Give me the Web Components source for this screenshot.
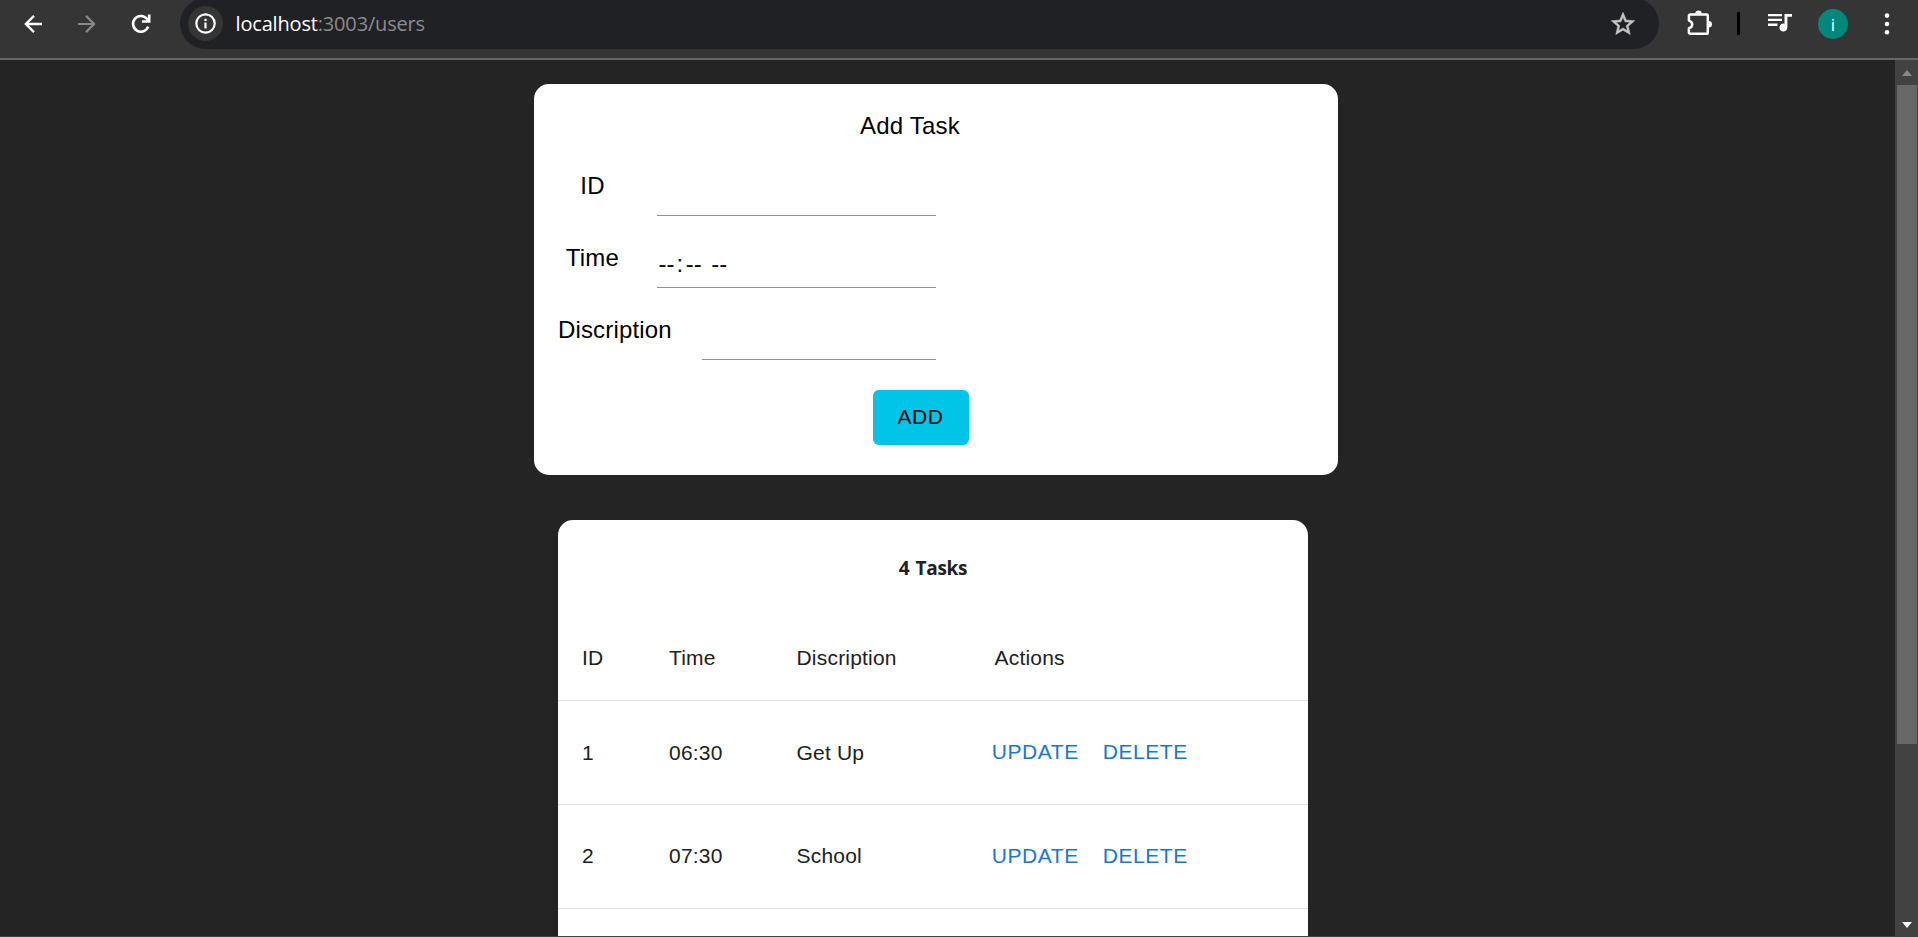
<!DOCTYPE html>
<html lang="en">
<head>
<meta charset="utf-8">
<title>Tasks</title>
<style>
html,body{margin:0;height:100%;overflow:hidden;background:#242424}
body{font-family:"Liberation Sans",Arial,sans-serif}
</style>
</head>
<body>
<task-app></task-app>
<script>
const define = (name, html, setup) => customElements.define(name, class extends HTMLElement {
  constructor() {
    super();
    this.attachShadow({ mode: 'open' }).innerHTML = html;
  }
  connectedCallback() { if (setup) setup(this, this.shadowRoot); }
});

define('browser-bar', `
<style>
:host{display:flex;align-items:flex-start;box-sizing:border-box;height:60px;background:#353535;border-bottom:2px solid #666;overflow:hidden}
svg{display:block;flex:none}
.nav{display:flex;width:180px;height:47px;align-items:center}
.omni{display:flex;align-items:center;box-sizing:border-box;width:1479px;height:51px;margin-top:-2px;border-radius:25.5px;background:#202124;padding:0 22px 0 8px}
.info{width:35px;height:35px;border-radius:50%;background:#353535;display:flex;align-items:center;justify-content:center}
.url{flex:1;margin-left:12.500px;font:20px/28px "Open Sans","Noto Sans",sans-serif;letter-spacing:-.17px;color:#8c8c8c}
.url b{font-weight:400;color:#fff}
.right{display:flex;align-items:center;height:47px}
.sep{width:3px;height:23px;background:#000;border-radius:1px}
.av{width:30px;height:30px;border-radius:50%;background:#00897b;color:#fff;font:17px/31px "Open Sans",sans-serif;text-align:center}
</style>
<div class="nav">
<svg width="18" height="18" viewBox="0 0 18 18" style="margin-left:24px" fill="none" stroke="#fff" stroke-width="2.4"><path d="M18 9H2M10 .9 1.9 9 10 17.1"/></svg>
<svg width="18" height="18" viewBox="0 0 18 18" style="margin-left:36px" fill="none" stroke="#888" stroke-width="2.2"><path d="M0 9h16M8 .9 16.1 9 8 17.1"/></svg>
<svg width="20" height="20" viewBox="0 0 20 20" style="margin-left:35px" fill="none" stroke="#fff" stroke-width="2.6"><path d="M17.2 12.6A7.8 7.8 0 1 1 16 5L18 7.2M18.2.5v7H11"/></svg>
</div>
<div class="omni">
<div class="info"><svg width="21" height="21" viewBox="0 0 21 21"><circle cx="10.500" cy="10.500" r="9.200" fill="none" stroke="#fff" stroke-width="2.200"/><path d="M9.400 9.500h2.200v6h-2.200zM9.400 5.800h2.200v2.200h-2.200z" fill="#fff"/></svg></div>
<div class="url"><b>localhost</b>:3003/users</div>
<svg width="28" height="28" viewBox="0 0 24 24"><path fill="#c4c4c4" stroke="#c4c4c4" stroke-width=".5" d="M22 9.240l-7.190-.620L12 2 9.190 8.630 2 9.240l5.460 4.730L5.820 21 12 17.270 18.180 21l-1.630-7.030L22 9.240zM12 15.400l-3.760 2.270 1-4.280-3.320-2.880 4.380-.380L12 6.100l1.710 4.040 4.380.380-3.320 2.880 1 4.280L12 15.400z"/></svg>
</div>
<div class="right">
<svg width="27" height="27" viewBox="0 0 27 27" style="margin-left:27px;margin-top:-3px"><path d="M4.200 5.500H20.500a1.300 1.300 0 0 1 1.300 1.300V23.400a1.300 1.300 0 0 1-1.300 1.300H4.200A1.300 1.300 0 0 1 2.900 23.400V19.200C7.300 18.200 7.300 12.600 2.900 11.600V6.800A1.300 1.300 0 0 1 4.200 5.500Z" fill="none" stroke="#fff" stroke-width="2.500" stroke-linejoin="round"/><path d="M9.300 4.700a3.200 3.200 0 0 1 6.400 0zM22.700 11.900a3.300 3.300 0 0 1 0 6.600z" fill="#fff"/></svg>
<div class="sep" style="margin-left:24px"></div>
<svg width="24" height="20" viewBox="0 0 24 20" style="margin-left:28px;margin-top:-2px"><path fill="#fff" d="M0 1h14v2.300H0zM0 5.800h14v2.300H0zM0 10.600h9.500v2.300H0zM16.500 1H24v2.800h-4.600V14.500a4 4 0 1 1-2.900-3.850z"/></svg>
<div class="av" style="margin-left:26px">i</div>
<svg width="6" height="22" viewBox="0 0 6 22" style="margin-left:36px" fill="#fff"><circle cx="3" cy="2.600" r="2.300"/><circle cx="3" cy="11" r="2.300"/><circle cx="3" cy="19.200" r="2.300"/></svg>
</div>`);

define('scroll-rail', `
<style>
:host{display:flex;flex-direction:column;align-items:center;box-sizing:border-box;width:23px;background:#424242;padding:10px 1px 8px 2px}
i{display:block;width:20px;height:659px;margin:9px 0 auto;background:#686868}
svg{display:block}
</style>
<svg width="10" height="6"><path d="M5 0l5 6H0z" fill="#888"/></svg><i></i><svg width="10" height="6"><path d="M0 0h10L5 6z" fill="#fff"/></svg>`);

define('form-field', `
<style>
:host{display:flex;height:72px;font-size:24px;color:#000}
.l{box-sizing:border-box;width:69px;text-align:center;line-height:36px;letter-spacing:.22px;white-space:nowrap}
:host([wide]) .l{width:113px;letter-spacing:.15px}
.in{box-sizing:border-box;width:279px;height:48px;margin-left:30px;border-bottom:1px solid #949494;padding:10px 0 0 1.500px;line-height:28px;white-space:pre;color:#111}
:host([wide]) .in{width:234px;margin-left:31px}
</style>
<div class="l"></div><div class="in"><slot></slot></div>`, (el, r) => r.querySelector('.l').textContent = el.getAttribute('label'));

define('add-task', `
<style>
:host{display:block;box-sizing:border-box;width:804px;height:391px;background:#fff;border-radius:15px;padding:24px}
h1{margin:0 0 24px;width:704px;text-align:center;font-size:24px;line-height:36px;font-weight:400;letter-spacing:.22px}
button{display:block;width:96px;height:55px;margin:6px 0 0 315px;border:0;border-radius:6px;background:#00c5e7;color:#000;font:21px/36px "Liberation Sans",Arial,sans-serif;letter-spacing:.6px;padding:0 1px 2px 0}
</style>
<h1>Add Task</h1>
<form-field label="ID"></form-field>
<form-field label="Time">--<span style="padding:0 2.500px 0 2px">:</span>--<span style="padding-left:3px"> </span>--</form-field>
<form-field label="Discription" wide></form-field>
<button type="button">ADD</button>`);

define('task-row', `
<style>
:host{display:grid;grid-template-columns:87px 127.500px 198px 111px 1fr;align-items:center;box-sizing:border-box;height:104px;padding:0 0 0 24px;border-bottom:1px solid #e0e0e0;font-size:21px;letter-spacing:.2px;color:#212121}
:host([head]){height:85px}
:host([late]) ::slotted(span){position:relative;top:-1px}
::slotted(a){color:#1976d2;letter-spacing:.55px;position:relative;top:-1px;margin-left:-2.700px}
</style><slot></slot>`);

define('task-table', `
<style>
:host{display:block;width:750px;height:416px;background:#fff;border-radius:15px 15px 0 0;overflow:hidden}
h2{margin:0;height:96px;font:700 19px/96px "Open Sans","Noto Sans",sans-serif;letter-spacing:-.3px;word-spacing:1.500px;text-align:center;color:#212121}
</style>
<h2>4 Tasks</h2>
<task-row head><span>ID</span><span>Time</span><span>Discription</span><span>Actions</span></task-row>
<task-row><span>1</span><span>06:30</span><span>Get Up</span><a>UPDATE</a><a>DELETE</a></task-row>
<task-row late><span>2</span><span>07:30</span><span>School</span><a>UPDATE</a><a>DELETE</a></task-row>`);

define('task-app', `
<style>
:host{display:flex;flex-direction:column;width:1918px;height:937px;background:#242424;overflow:hidden;box-sizing:border-box;border-bottom:1px solid #424242}
.view{display:flex;flex:1;min-height:0}
main{flex:1;box-sizing:border-box;padding:24px 0 0 534px}
task-table{margin:45px 0 0 24px}
</style>
<browser-bar></browser-bar>
<div class="view"><main><add-task></add-task><task-table></task-table></main><scroll-rail></scroll-rail></div>`);
</script>
</body>
</html>
